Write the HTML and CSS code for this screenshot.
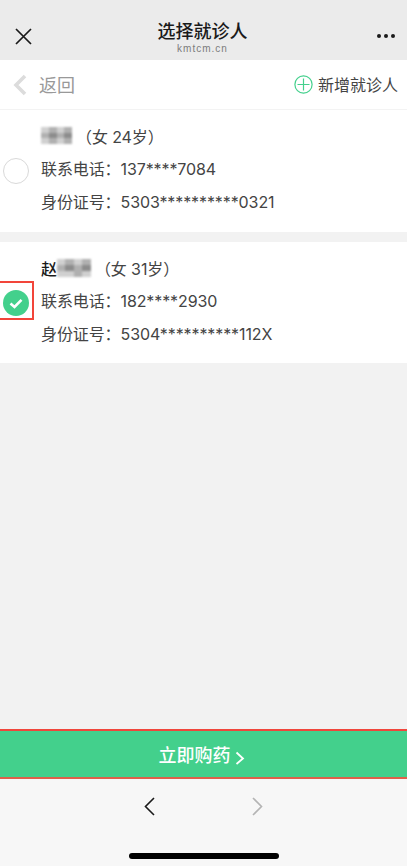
FILE: index.html
```html
<!DOCTYPE html>
<html lang="zh">
<head>
    <meta charset="UTF-8">
    <meta name="viewport" content="width=device-width, initial-scale=1.0">
    <title>选择就诊人</title>
    <link rel="stylesheet" href="styles.css">
</head>
<body>
    <div class="page">
        <!-- Top title bar -->
        <div class="title-bar">
            <svg class="close-icon" width="18" height="18" viewBox="0 0 18 18"><path d="M2 2L17 17M17 2L2 17" stroke="#1a1a1a" stroke-width="1.7" fill="none"/></svg>
            <div class="title-text">
                <div class="title">选择就诊人</div>
                <div class="domain">kmtcm.cn</div>
            </div>
            <div class="dots"><span></span><span></span><span></span></div>
        </div>

        <!-- Back / add row -->
        <div class="sub-bar">
            <div class="back">
                <svg width="16" height="22" viewBox="0 0 16 22"><path d="M13 2L4 11L13 20" stroke="#dcdcdc" stroke-width="3.6" fill="none"/></svg>
                <span>返回</span>
            </div>
            <div class="add">
                <svg width="19" height="19" viewBox="0 0 19 19"><circle cx="9.5" cy="9.5" r="8.6" stroke="#43d08c" stroke-width="1.2" fill="none"/><path d="M9.5 3.5V15.5M3.5 9.5H15.5" stroke="#43d08c" stroke-width="1.2"/></svg>
                <span>新增就诊人</span>
            </div>
        </div>

        <!-- Patients -->
        <div class="card">
            <div class="pick"><div class="radio"></div></div>
            <div class="info">
                <div class="name-row">
                    <div class="blur blur-one">
                        <i class="l"></i><i class="m"></i><i class="l"></i><i class="m"></i>
                        <i class="m"></i><i class="d"></i><i class="m"></i><i class="d"></i>
                        <i class="l"></i><i class="m"></i><i class="l"></i><i class="m"></i>
                    </div>
                    <span class="gender">（女 24岁）</span>
                </div>
                <div class="line">联系电话：137****7084</div>
                <div class="line">身份证号：5303**********0321</div>
            </div>
        </div>

        <div class="card card-second">
            <div class="pick">
                <div class="pick-box">
                    <svg width="26" height="26" viewBox="0 0 26 26"><circle cx="13" cy="13" r="13" fill="#43d08c"/><path d="M7.5 13.5L11.5 17L18.5 9.8" stroke="#fff" stroke-width="2.6" fill="none"/></svg>
                </div>
            </div>
            <div class="info">
                <div class="name-row">
                    <span class="surname">赵</span>
                    <div class="blur blur-two">
                        <i class="l"></i><i class="m"></i><i class="l"></i><i class="m"></i>
                        <i class="m"></i><i class="d"></i><i class="m"></i><i class="d"></i>
                        <i class="l"></i><i class="l"></i><i class="m"></i><i class="l"></i>
                    </div>
                    <span class="gender">（女 31岁）</span>
                </div>
                <div class="line">联系电话：182****2930</div>
                <div class="line">身份证号：5304**********112X</div>
            </div>
        </div>

        <div class="spacer"></div>

        <!-- Buy button -->
        <div class="buy">
            <span>立即购药</span>
            <svg class="buy-arrow" width="10" height="14" viewBox="0 0 10 14"><path d="M1.5 1.5L8 7.5L1.5 13" stroke="#fff" stroke-width="1.8" fill="none"/></svg>
        </div>

        <!-- Browser nav -->
        <div class="nav">
            <div class="nav-arrows">
                <svg width="11" height="19" viewBox="0 0 11 19"><path d="M10 1L1.5 9.5L10 18" stroke="#1a1a1a" stroke-width="1.6" fill="none"/></svg>
                <svg width="11" height="19" viewBox="0 0 11 19"><path d="M1 1L9.5 9.5L1 18" stroke="#b4b4b4" stroke-width="1.6" fill="none"/></svg>
            </div>
            <div class="home-bar"></div>
        </div>
    </div>
</body>
</html>
```

FILE: styles.css
```css
html, body {
    margin: 0;
    padding: 0;
    background: #f2f2f2;
}

.page {
    width: 407px;
    height: 866px;
    display: flex;
    flex-direction: column;
    overflow: hidden;
    font-family: Inter, "Noto Sans CJK SC", sans-serif;
    color: #333;
}

.title-bar {
    height: 60px;
    background: #ebebeb;
    display: flex;
    align-items: flex-start;
    justify-content: space-between;
    padding: 0 12px 0 14px;
    box-sizing: border-box;
}

.close-icon {
    margin-top: 27px;
}

.title-text {
    text-align: center;
    padding-top: 20px;
    margin-right: 4px;
}

.title {
    font-size: 18px;
    line-height: 23px;
    font-weight: 500;
    color: #1a1a1a;
}

.domain {
    font-family: "Liberation Sans", sans-serif;
    font-size: 10px;
    line-height: 12px;
    letter-spacing: 1px;
    color: #7c7c7c;
}

.dots {
    display: flex;
    gap: 3px;
    margin-top: 34px;
}

.dots span {
    width: 4px;
    height: 4px;
    border-radius: 50%;
    background: #1a1a1a;
}

.sub-bar {
    height: 50px;
    background: #fff;
    border-bottom: 1px solid #f3f3f3;
    box-sizing: border-box;
    display: flex;
    align-items: center;
    justify-content: space-between;
    padding: 0 9px 0 12px;
}

.back, .add {
    display: flex;
    align-items: center;
}

.back span, .add span {
    padding-bottom: 2px;
}

.back {
    gap: 11px;
    font-size: 18px;
    color: #999;
}

.add {
    gap: 5px;
    font-size: 16px;
    color: #444;
}

.card {
    height: 122px;
    background: #fff;
    display: flex;
}

.card-second {
    margin-top: 10px;
    height: 121px;
}

.pick {
    width: 41px;
    flex-shrink: 0;
    display: flex;
    align-items: center;
}

.radio {
    width: 24px;
    height: 24px;
    margin-left: 3px;
    border: 1px solid #d9d9d9;
    border-radius: 50%;
}

.pick-box {
    width: 34px;
    height: 39px;
    border: 2px solid #f2453a;
    border-left: 0;
    display: flex;
    align-items: center;
    padding: 4px 0 0 3px;
    box-sizing: border-box;
    margin-top: -4px;
}

.info {
    padding-top: 10px;
    letter-spacing: -0.1px;
}

.name-row {
    display: flex;
    align-items: center;
    height: 33px;
    padding-bottom: 2px;
    box-sizing: border-box;
    font-size: 16px;
}

.surname {
    color: #1a1a1a;
    font-weight: 500;
}

.blur {
    display: grid;
    grid-template-columns: repeat(4, 1fr);
    background: #c4c4c4;
    filter: blur(1.2px);
}

.blur i.l {
    background: #d0d0d0;
}

.blur i.m {
    background: #b0b0b0;
}

.blur i.d {
    background: #8c8c8c;
}

.blur-one {
    width: 31px;
    height: 17px;
}

.blur-two {
    width: 34px;
    height: 18px;
}

.gender {
    margin-left: 4px;
    color: #444;
}

.line {
    height: 33px;
    line-height: 33px;
    font-size: 16px;
    color: #444;
    white-space: nowrap;
}

.spacer {
    flex: 1;
}

.buy {
    height: 50px;
    box-sizing: border-box;
    background: #43d08c;
    border-top: 2px solid #f0463c;
    border-bottom: 2px solid #e0604a;
    color: #fff;
    font-size: 18px;
    font-weight: 500;
    display: flex;
    align-items: center;
    justify-content: center;
    gap: 4px;
    padding-right: 4px;
}

.buy-arrow {
    margin-top: 7px;
}

.nav {
    height: 87px;
    background: #f7f7f7;
    display: flex;
    flex-direction: column;
    align-items: center;
}

.nav-arrows {
    display: flex;
    gap: 97px;
    margin-top: 18px;
}

.home-bar {
    width: 150px;
    height: 6px;
    margin-top: 37px;
    background: #000;
    border-radius: 3px;
}
```
